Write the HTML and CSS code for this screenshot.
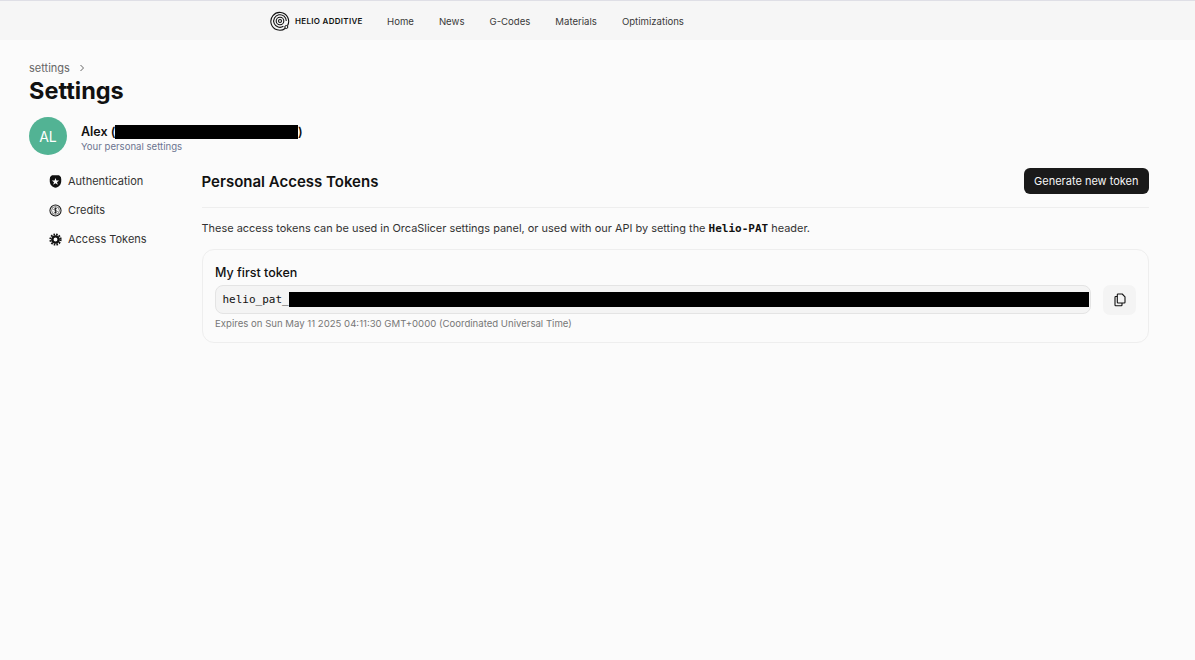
FILE: index.html
```html
<!DOCTYPE html>
<html lang="en">
<head>
  <meta charset="UTF-8" />
  <title>Settings</title>
  <link rel="stylesheet" href="styles.css">
</head>
<body>
  <header class="topbar">
    <div class="brand">
      <svg class="brand-logo" viewBox="0 0 20 20" fill="none" stroke="#111" stroke-width="1.1">
        <path d="M15.400 17.200A8.900 8.900 0 1 1 17.500 14.700" />
        <path d="M16.300 10A6.300 6.300 0 1 0 13.400 15.300" />
        <circle cx="10" cy="10" r="3.800" />
        <circle cx="10" cy="10" r="1.500" />
        <circle cx="16.300" cy="16" r="1.500" stroke-width="1" />
      </svg>
      <span class="brand-name">HELIO ADDITIVE</span>
    </div>
    <nav class="nav">
      <a>Home</a>
      <a>News</a>
      <a>G-Codes</a>
      <a>Materials</a>
      <a>Optimizations</a>
    </nav>
  </header>

  <main class="page">
    <div class="crumbs">
      <span>settings</span>
      <svg class="crumb-arrow" viewBox="0 0 8 10" fill="none" stroke="#666" stroke-width="1"><path d="M2.500 2 5.500 5 2.500 8" /></svg>
    </div>
    <h1>Settings</h1>

    <div class="user">
      <div class="avatar">AL</div>
      <div class="user-text">
        <div class="user-name">Alex (<span class="redact redact-email"></span>)</div>
        <div class="user-sub">Your personal settings</div>
      </div>
    </div>

    <div class="columns">
      <aside class="side">
        <a class="side-item">
          <svg class="side-icon" viewBox="0 0 14 14"><path fill="#111" fill-rule="evenodd" d="M3.200.4h7.600l2 1.700c.9 3.600.5 7.500-1.600 9.600-1.100 1-2.600 1.900-4.200 2.100-1.600-.2-3.100-1.100-4.200-2.100C.7 9.600.3 5.700 1.200 2.100ZM7 3.200 8 6H10.900L8.600 7.700 9.500 10.600 7 8.800 4.500 10.600 5.400 7.700 3.100 6H6Z" /></svg>
          Authentication
        </a>
        <a class="side-item">
          <svg class="side-icon" viewBox="0 0 14 14" fill="none" stroke="#111" stroke-width="1.100"><circle cx="7" cy="7" r="6" /><circle cx="7" cy="7" r="4.200" stroke-width=".6" /><path d="M8.700 5.500C8.300 4.700 5.400 4.500 5.400 5.900 5.400 7.300 8.700 6.600 8.700 8.100 8.700 9.500 5.700 9.300 5.200 8.500M7 3.700v6.600" stroke-width=".9" /></svg>
          Credits
        </a>
        <a class="side-item">
          <svg class="side-icon" viewBox="0 0 14 14" fill="none" stroke="#111"><circle cx="7" cy="7" r="5.500" stroke-width="2.200" stroke-dasharray="1.700 1.180" /><circle cx="7" cy="7" r="3.400" stroke-width="2.600" /></svg>
          Access Tokens
        </a>
      </aside>

      <section class="content">
        <div class="content-head">
          <h2>Personal Access Tokens</h2>
          <button class="btn-dark">Generate new token</button>
        </div>
        <p class="intro">These access tokens can be used in OrcaSlicer settings panel, or used with our API by setting the <code>Helio-PAT</code> header.</p>

        <div class="token-card">
          <div class="token-title">My first token</div>
          <div class="token-row">
            <div class="token-field">
              <span class="token-text">helio_pat_</span><span class="redact redact-token"></span>
            </div>
            <button class="btn-copy">
              <svg viewBox="0 0 14 14" width="14" height="14" fill="none" stroke="#111" stroke-width="1.100" stroke-linejoin="round"><path d="M5 1h4.200L12 3.800v5.500a.7.700 0 0 1-.7.700H5a.7.700 0 0 1-.7-.7V1.700A.7.700 0 0 1 5 1Z" /><path d="M4.300 3.500H2.700a.7.700 0 0 0-.7.700v7.900c0 .4.300.7.700.7h5.600c.4 0 .7-.3.700-.7V10" /></svg>
            </button>
          </div>
          <div class="token-expiry">Expires on Sun May 11 2025 04:11:30 GMT+0000 (Coordinated Universal Time)</div>
        </div>
      </section>
    </div>
  </main>
</body>
</html>
```

FILE: styles.css
```css
* {
  box-sizing: border-box;
}
html, body {
  height: 100%;
}
body {
  margin: 0;
  background: #fbfbfb;
  color: #111;
  font-family: Inter, "Liberation Sans", sans-serif;
  overflow: hidden;
}
.topbar {
  height: 40px;
  background: #f6f6f6;
  border-top: 1px solid #dfdfe6;
  padding: 1px 0 0 270px;
  display: flex;
  align-items: center;
}
.brand {
  display: flex;
  align-items: center;
  gap: 5px;
  width: 117px;
}
.brand-logo {
  width: 20px;
  height: 20px;
}
.brand-name {
  font-size: 8px;
  font-weight: 600;
  letter-spacing: 0.3px;
}
.nav {
  display: flex;
  gap: 25px;
  font-size: 9.600px;
  color: #3a3a3a;
}
.page {
  padding: 21px 46px 0 29px;
}
.crumbs {
  display: flex;
  align-items: center;
  gap: 8px;
  height: 14px;
  font-size: 11px;
  color: #666;
}
.crumb-arrow {
  width: 8px;
  height: 10px;
}
h1 {
  margin: 1px 0 0;
  font-size: 23.500px;
  line-height: 30px;
  font-weight: 700;
}
.user {
  display: flex;
  align-items: center;
  gap: 14px;
  margin-top: 11px;
}
.avatar {
  width: 38px;
  height: 38px;
  border-radius: 50%;
  background: #52b394;
  color: #fff;
  font-size: 14px;
  display: flex;
  align-items: center;
  justify-content: center;
}
.user-text {
  padding-top: 4px;
}
.user-name {
  font-size: 12.500px;
  font-weight: 600;
  line-height: 16px;
  display: flex;
  align-items: center;
}
.user-sub {
  font-size: 9.600px;
  line-height: 12px;
  margin-top: 1px;
  color: #6b7490;
}
.redact {
  display: inline-block;
  background: #000;
}
.redact-email {
  width: 182.500px;
  height: 14px;
}
.columns {
  display: flex;
  margin-top: 13px;
}
.side {
  width: 172.500px;
  padding-left: 20px;
  display: flex;
  flex-direction: column;
  gap: 11px;
  padding-top: 4px;
}
.side-item {
  display: flex;
  align-items: center;
  gap: 6px;
  height: 18px;
  font-size: 11px;
  color: #333;
}
.side-icon {
  width: 13px;
  height: 13px;
}
.content {
  flex: 1;
}
.content-head {
  display: flex;
  justify-content: space-between;
  align-items: center;
  height: 40px;
  padding-bottom: 14px;
  border-bottom: 1px solid #eeeeee;
}
h2 {
  margin: 2px 0 0;
  font-size: 15px;
  font-weight: 600;
}
.btn-dark {
  height: 26px;
  padding: 0 10.500px;
  background: #1a1a1a;
  color: #f5f5f5;
  border: none;
  border-radius: 6px;
  font-family: inherit;
  font-size: 11px;
}
.intro {
  margin: 13px 0 0;
  font-size: 10.950px;
  line-height: 14px;
  color: #333;
}
code {
  font-family: "DejaVu Sans Mono", monospace;
  font-weight: 700;
  font-size: 11px;
  color: #111;
}
.token-card {
  margin-top: 13px;
  border: 1px solid #eeeeee;
  border-radius: 12px;
  padding: 15px 12px 12px 12.500px;
}
.token-title {
  font-size: 12.500px;
  font-weight: 500;
  line-height: 15px;
}
.token-row {
  display: flex;
  align-items: flex-start;
  gap: 12px;
  margin-top: 5px;
}
.token-field {
  flex: 1;
  height: 28.500px;
  background: #f4f4f4;
  border: 1.500px solid #e4e4e4;
  border-radius: 8px;
  padding: 0 1px 0 6.500px;
  display: flex;
  align-items: center;
  overflow: hidden;
}
.token-text {
  font-family: "DejaVu Sans Mono", monospace;
  font-size: 11px;
}
.redact-token {
  flex: 1;
  height: 15px;
}
.btn-copy {
  width: 33px;
  height: 30px;
  background: #f4f4f4;
  border: none;
  border-radius: 7px;
  display: flex;
  align-items: center;
  justify-content: center;
  padding: 0;
}
.token-expiry {
  margin-top: 3px;
  font-size: 9.600px;
  line-height: 12px;
  color: #777;
}
```
